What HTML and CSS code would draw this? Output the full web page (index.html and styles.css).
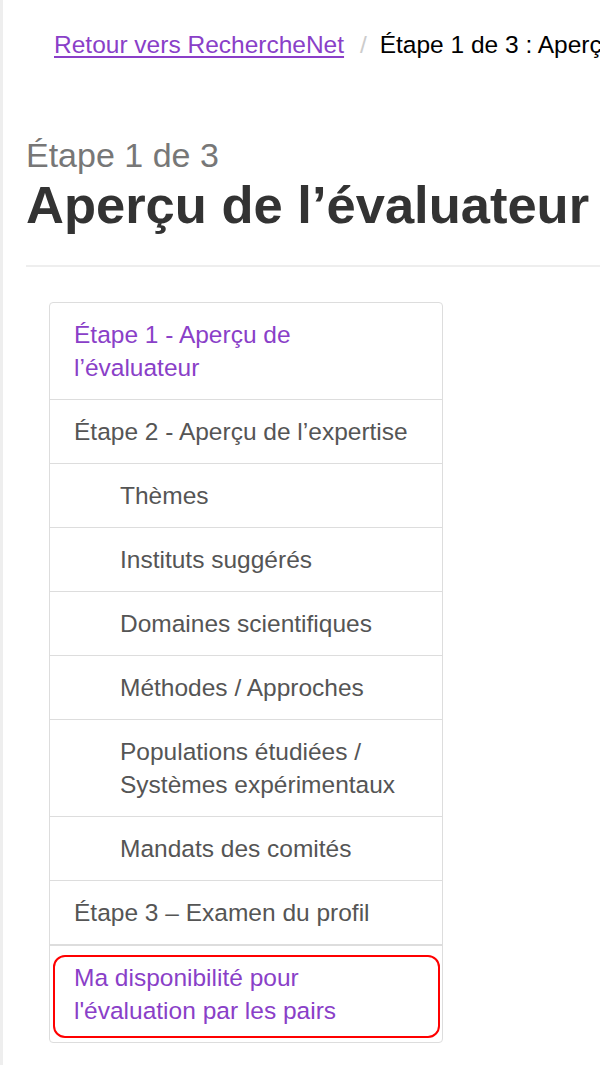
FILE: index.html
```html
<!DOCTYPE html>
<html lang="fr">
<head>
<meta charset="utf-8">
<title>Étape 1 de 3 : Aperçu de l’évaluateur</title>
<link rel="stylesheet" href="styles.css">
</head>
<body>
<div class="page">
  <ol class="breadcrumb">
    <li><a href="#">Retour vers RechercheNet</a></li>
    <li class="active">Étape 1 de 3 : Aperçu de l’évaluateur</li>
  </ol>
  <div class="page-header">
    <p class="step">Étape 1 de 3</p>
    <h1>Aperçu de l’évaluateur</h1>
  </div>
  <div class="list-group">
    <a class="item current" href="#">Étape 1 - Aperçu de l’évaluateur</a>
    <div class="item">Étape 2 - Aperçu de l’expertise</div>
    <div class="item sub">Thèmes</div>
    <div class="item sub">Instituts suggérés</div>
    <div class="item sub">Domaines scientifiques</div>
    <div class="item sub">Méthodes / Approches</div>
    <div class="item sub">Populations étudiées / Systèmes expérimentaux</div>
    <div class="item sub">Mandats des comités</div>
    <div class="item">Étape 3 – Examen du profil</div>
    <a class="item link highlighted" href="#">Ma disponibilité pour l'évaluation par les pairs</a>
  </div>
</div>
</body>
</html>
```
FILE: styles.css
```css
html, body {
  margin: 0;
  padding: 0;
  background: #fff;
}
body {
  font-family: "Liberation Sans", Arial, sans-serif;
  overflow: hidden;
}
.page {
  border-left: 3px solid #eeeeee;
  min-height: 1065px;
  box-sizing: border-box;
  padding-left: 23px;
}
.breadcrumb {
  list-style: none;
  margin: 0;
  padding: 27px 0 0 28px;
  display: flex;
  white-space: nowrap;
  font-size: 24.5px;
  line-height: 35px;
  color: #000;
}
.breadcrumb li + li::before {
  content: "/\00a0";
  color: #cccccc;
  padding: 0 6px 0 16px;
}
.breadcrumb a {
  color: #8a3fc8;
  text-decoration: underline;
  text-underline-offset: 3px;
}
.page-header {
  margin-top: 73px;
  padding-bottom: 31px;
  border-bottom: 2px solid #eeeeee;
}
.step {
  margin: 0;
  font-size: 34px;
  line-height: 40px;
  color: #777777;
  white-space: nowrap;
}
h1 {
  margin: 1px 0 0;
  font-size: 52.5px;
  line-height: 58px;
  font-weight: bold;
  color: #333333;
  white-space: nowrap;
}
.list-group {
  margin: 35px 0 0 23px;
  width: 394px;
  box-sizing: border-box;
  border: 1px solid #dddddd;
  border-radius: 4px;
  display: flex;
  flex-direction: column;
}
.item {
  display: block;
  padding: 15px 24px;
  font-size: 24.5px;
  line-height: 33px;
  color: #555555;
  text-decoration: none;
  border-top: 1px solid #dddddd;
}
.item:first-child {
  border-top: 0;
}
.item.sub {
  padding-left: 70px;
}
.item.current,
.item.link {
  color: #8a3fc8;
}
.item.highlighted {
  position: relative;
  border-top: 2px solid #dddddd;
}
.item.highlighted::after {
  content: "";
  position: absolute;
  left: 3px;
  right: 2px;
  top: 9px;
  bottom: 4px;
  border: 2.5px solid #ff0000;
  border-radius: 12px;
  pointer-events: none;
}
```
